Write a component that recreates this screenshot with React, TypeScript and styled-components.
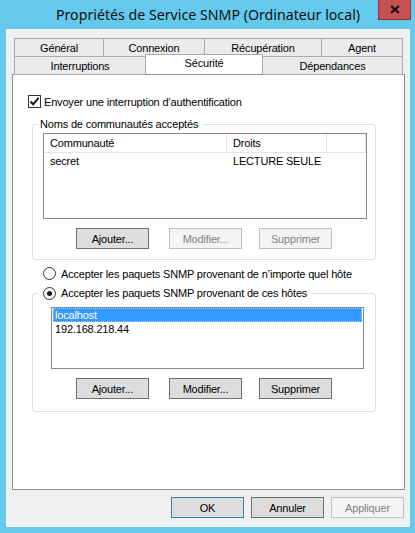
import React from 'react';
import styled, { createGlobalStyle } from 'styled-components';

const GlobalStyle = createGlobalStyle`
  html, body {
    margin: 0;
    padding: 0;
    background: #64c9ec;
  }
  * {
    box-sizing: border-box;
  }
`;

const Window = styled.div`
  width: 415px;
  height: 533px;
  background: #64c9ec;
  display: flex;
  flex-direction: column;
  padding: 0 5px 6px 6px;
  font-family: "Liberation Sans", Arial, sans-serif;
  font-size: 11px;
  letter-spacing: -0.18px;
  color: #000;
`;

const TitleBar = styled.div`
  height: 29px;
  display: grid;
  grid-template-columns: 1fr auto 1fr;
`;

const Title = styled.div`
  grid-column: 2;
  font-family: "Noto Sans", sans-serif;
  font-size: 14.2px;
  letter-spacing: 0;
  line-height: 29px;
  color: #111;
  white-space: nowrap;
`;

const CloseButton = styled.div`
  grid-column: 3;
  justify-self: end;
  width: 33px;
  height: 20px;
  margin-right: -1px;
  background: #c75050;
  border: 1px solid #8f3535;
  border-top: none;
  display: flex;
  align-items: center;
  justify-content: center;
`;

const Client = styled.div`
  flex: 1;
  background: #f0f0f0;
  display: flex;
  flex-direction: column;
  padding: 9px 5px 9px 6px;
`;

const TabStrip = styled.div`
  margin: 0 2px;
  display: flex;
  flex-direction: column;
`;

const TabRow = styled.div<{ $second?: boolean }>`
  display: flex;
  margin-top: ${p => (p.$second ? '-1px' : '0')};
`;

const Tab = styled.div<{ $w: number; $selected?: boolean }>`
  width: ${p => p.$w}px;
  height: ${p => (p.$selected ? 20 : 19)}px;
  margin-top: ${p => (p.$selected ? '-2px' : '0')};
  background: ${p => (p.$selected ? '#fff' : '#ebebeb')};
  border: 1px solid #acacac;
  border-bottom: ${p => (p.$selected ? 'none' : '1px solid #acacac')};
  position: relative;
  z-index: ${p => (p.$selected ? 2 : 1)};
  display: flex;
  justify-content: center;
  align-items: ${p => (p.$selected ? 'flex-start' : 'center')};
  padding-top: ${p => (p.$selected ? '2px' : '0')};
  white-space: nowrap;
  & + & {
    margin-left: -1px;
  }
`;

const Panel = styled.div`
  flex: 1;
  margin-top: -1px;
  background: #fff;
  border: 1px solid #8e8f8f;
  display: flex;
  flex-direction: column;
  padding-top: 20px;
`;

const CheckRow = styled.label`
  display: flex;
  align-items: center;
  gap: 3px;
  margin-left: 15px;
  height: 13px;
`;

const CheckBox = styled.span`
  width: 13px;
  height: 13px;
  border: 1px solid #333;
  background: #fff;
  display: flex;
  align-items: center;
  justify-content: center;
`;

const GroupBox = styled.fieldset<{ $top: number; $pb: number }>`
  width: 344px;
  margin: ${p => p.$top}px 0 0 19px;
  padding: 0 8px ${p => p.$pb}px 10px;
  border: 1px solid #dcdfe3;
  border-radius: 3px;
  min-width: 0;
`;

const Legend = styled.legend<{ $pl: number }>`
  margin-left: -5px;
  padding: 0 5px 0 ${p => p.$pl}px;
  line-height: 13px;
  display: flex;
  align-items: center;
  gap: 5px;
`;

const ListView = styled.div`
  margin-top: 2px;
  width: 100%;
  height: 86px;
  border: 1px solid #828790;
  background: #fff;
`;

const ListGrid = styled.div`
  display: grid;
  grid-template-columns: 183px 100px 1fr;
`;

const HeaderCell = styled.div`
  height: 19px;
  line-height: 18px;
  padding-left: 6px;
  border-right: 1px solid #e5e5e5;
  border-bottom: 1px solid #e5e5e5;
  &:last-child {
    border-right: none;
  }
`;

const Cell = styled.div`
  height: 17px;
  line-height: 17px;
  padding-left: 6px;
`;

const ListBox = styled.div`
  margin: 7px 0 0 8px;
  width: 313px;
  height: 62px;
  border: 1px solid #828790;
  background: #fff;
  padding: 0 1px;
`;

const ListItem = styled.div<{ $selected?: boolean }>`
  height: 14px;
  line-height: 14px;
  padding-left: 2px;
  background: ${p => (p.$selected ? '#3399ff' : 'transparent')};
  color: ${p => (p.$selected ? '#fff' : '#000')};
  outline: ${p => (p.$selected ? '1px dotted #9fd0ff' : 'none')};
  outline-offset: -1px;
`;

const ButtonRow = styled.div`
  display: flex;
  margin: 9px 0 0 33px;
  & > :nth-child(2) {
    margin-left: 20px;
  }
  & > :nth-child(3) {
    margin-left: 17px;
  }
`;

const Button = styled.button<{ $variant?: 'default' | 'disabled' | 'focus' }>`
  width: 73px;
  height: 21px;
  padding: 0;
  font-family: "Liberation Sans", Arial, sans-serif;
  font-size: 11px;
  letter-spacing: -0.18px;
  background: ${p => (p.$variant === 'disabled' ? '#f4f4f4' : '#dddddd')};
  color: ${p => (p.$variant === 'disabled' ? '#838383' : '#000')};
  border: 1px solid
    ${p =>
      p.$variant === 'disabled'
        ? '#bfbfbf'
        : p.$variant === 'default'
        ? '#3c7fb1'
        : '#707070'};
  border-radius: 0;
`;

const RadioRow = styled.label`
  display: flex;
  align-items: center;
  gap: 5px;
  margin: 7px 0 0 30px;
  height: 13px;
`;

const Radio = styled.span<{ $checked?: boolean }>`
  width: 13px;
  height: 13px;
  border-radius: 50%;
  border: 1px solid #333;
  background: #fff;
  display: flex;
  align-items: center;
  justify-content: center;
  &::after {
    content: '';
    width: 5px;
    height: 5px;
    border-radius: 50%;
    background: ${p => (p.$checked ? '#1a1a1a' : 'transparent')};
  }
`;

const Footer = styled.div`
  display: flex;
  justify-content: flex-end;
  gap: 7px;
  margin: 7px 1px 0 0;
`;

const App: React.FC = () => {
  return (
    <>
      <GlobalStyle />
      <Window>
        <TitleBar>
          <Title>Propriétés de Service SNMP (Ordinateur local)</Title>
          <CloseButton>
            <svg width="10" height="9" viewBox="0 0 10 9">
              <path d="M1.2 1 L8.8 8 M8.8 1 L1.2 8" stroke="#111" strokeWidth="2.2" />
            </svg>
          </CloseButton>
        </TitleBar>
        <Client>
          <TabStrip>
            <TabRow>
              <Tab $w={90}>Général</Tab>
              <Tab $w={102}>Connexion</Tab>
              <Tab $w={118}>Récupération</Tab>
              <Tab $w={82}>Agent</Tab>
            </TabRow>
            <TabRow $second>
              <Tab $w={132}>Interruptions</Tab>
              <Tab $w={118} $selected>Sécurité</Tab>
              <Tab $w={141}>Dépendances</Tab>
            </TabRow>
          </TabStrip>
          <Panel>
            <CheckRow>
              <CheckBox>
                <svg width="11" height="11" viewBox="0 0 11 11">
                  <path d="M1.5 5.5 L4.2 8.3 L9.5 1.8" fill="none" stroke="#111" strokeWidth="2" />
                </svg>
              </CheckBox>
              Envoyer une interruption d’authentification
            </CheckRow>

            <GroupBox $top={10} $pb={10}>
              <Legend $pl={2}>Noms de communautés acceptés</Legend>
              <ListView>
                <ListGrid>
                  <HeaderCell>Communauté</HeaderCell>
                  <HeaderCell>Droits</HeaderCell>
                  <HeaderCell />
                  <Cell>secret</Cell>
                  <Cell>LECTURE SEULE</Cell>
                  <Cell />
                </ListGrid>
              </ListView>
              <ButtonRow>
                <Button $variant="focus">Ajouter...</Button>
                <Button $variant="disabled">Modifier...</Button>
                <Button $variant="disabled">Supprimer</Button>
              </ButtonRow>
            </GroupBox>

            <RadioRow>
              <Radio />
              Accepter les paquets SNMP provenant de n’importe quel hôte
            </RadioRow>

            <GroupBox $top={7} $pb={12}>
              <Legend $pl={5}>
                <Radio $checked />
                Accepter les paquets SNMP provenant de ces hôtes
              </Legend>
              <ListBox>
                <ListItem $selected>localhost</ListItem>
                <ListItem>192.168.218.44</ListItem>
              </ListBox>
              <ButtonRow>
                <Button $variant="focus">Ajouter...</Button>
                <Button $variant="focus">Modifier...</Button>
                <Button $variant="focus">Supprimer</Button>
              </ButtonRow>
            </GroupBox>
          </Panel>
          <Footer>
            <Button $variant="default">OK</Button>
            <Button $variant="focus">Annuler</Button>
            <Button $variant="disabled">Appliquer</Button>
          </Footer>
        </Client>
      </Window>
    </>
  );
};

export default App;
